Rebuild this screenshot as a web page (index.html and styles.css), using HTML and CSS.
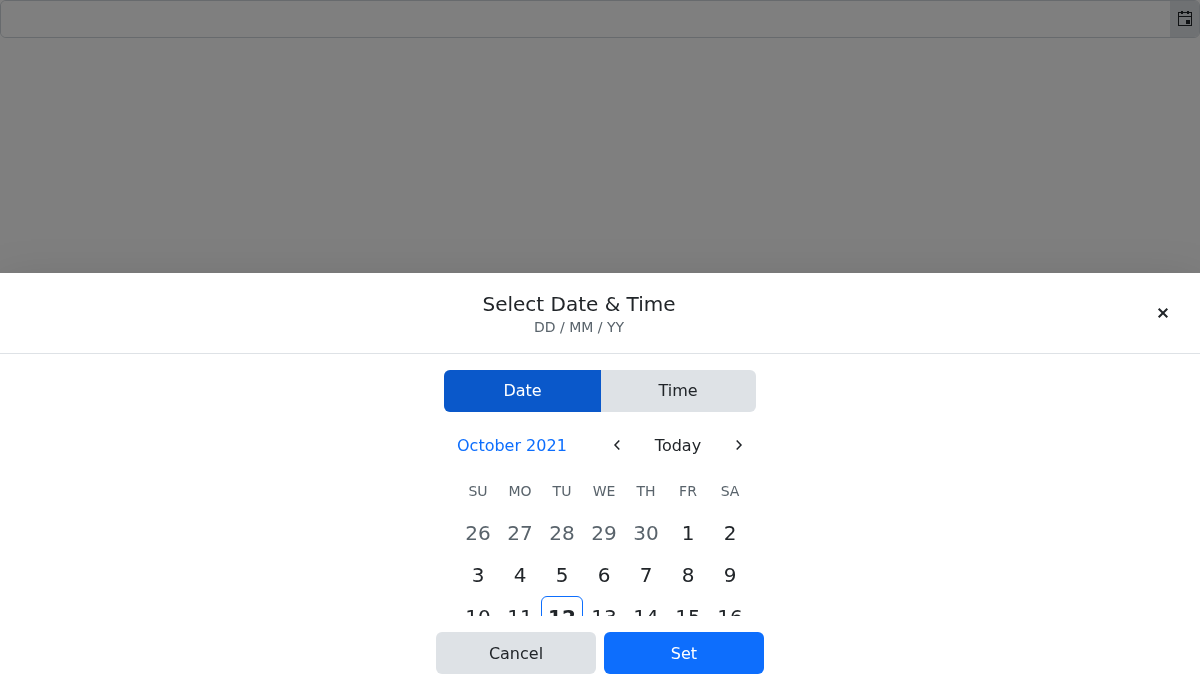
FILE: index.html
```html
<!DOCTYPE html>
<html lang="en">
<head>
<meta charset="utf-8">
<title>Date and time picker</title>
<link rel="stylesheet" href="styles.css">
</head>
<body>
<div class="picker">
  <input class="picker-input" type="text" aria-label="Date and time">
  <button class="picker-toggle" aria-label="Open">
    <svg width="16" height="16" viewBox="0 0 16 16"><path fill="currentColor" fill-rule="evenodd" d="M4 0h2v1h4V0h2v1h3v14H1V1h3zM2 2v3h12V2h-2v1h-2V2H6v1H4V2zM2 6v8h12V6zM9 9h4v4H9z"/></svg>
  </button>
</div>
<div class="overlay"></div>
<section class="sheet">
  <header class="sheet-header">
    <div class="titles">
      <div class="title">Select Date &amp; Time</div>
      <div class="subtitle">DD / MM / YY</div>
    </div>
    <button class="icon-button close" aria-label="Close">
      <svg width="16" height="16" viewBox="0 0 16 16"><path d="M3.7 3.7l8.6 8.6M12.3 3.7l-8.6 8.6" fill="none" stroke="currentColor" stroke-width="2"/></svg>
    </button>
  </header>
  <div class="sheet-content">
    <div class="tabs">
      <button class="tab selected">Date</button>
      <button class="tab">Time</button>
    </div>
    <div class="calendar">
      <div class="calendar-header">
        <button class="month">October 2021</button>
        <div class="nav">
          <button class="icon-button" aria-label="Previous"><svg width="16" height="16" viewBox="0 0 16 16"><path d="M10.3 3.5L6 8l4.3 4.5" fill="none" stroke="currentColor" stroke-width="1.5"/></svg></button>
          <button class="today">Today</button>
          <button class="icon-button" aria-label="Next"><svg width="16" height="16" viewBox="0 0 16 16"><path d="M5.7 3.5L10 8l-4.3 4.5" fill="none" stroke="currentColor" stroke-width="1.5"/></svg></button>
        </div>
      </div>
      <div class="days">
        <span class="weekday">SU</span><span class="weekday">MO</span><span class="weekday">TU</span><span class="weekday">WE</span><span class="weekday">TH</span><span class="weekday">FR</span><span class="weekday">SA</span>
        <span class="day other">26</span><span class="day other">27</span><span class="day other">28</span><span class="day other">29</span><span class="day other">30</span><span class="day">1</span><span class="day">2</span>
        <span class="day">3</span><span class="day">4</span><span class="day">5</span><span class="day">6</span><span class="day">7</span><span class="day">8</span><span class="day">9</span>
        <span class="day">10</span><span class="day">11</span><span class="day current">12</span><span class="day">13</span><span class="day">14</span><span class="day">15</span><span class="day">16</span>
      </div>
    </div>
  </div>
  <footer class="actions">
    <button class="action">Cancel</button>
    <button class="action primary">Set</button>
  </footer>
</section>
</body>
</html>
```

FILE: styles.css
```css
* { box-sizing: border-box; }
body {
  margin: 0;
  height: 682px;
  overflow: hidden;
  background: #fff;
  color: #212529;
  font: 16px/24px "DejaVu Sans", sans-serif;
}
button {
  border: 0;
  padding: 0;
  background: none;
  color: inherit;
  font: inherit;
}
svg { display: block; }
.picker {
  display: flex;
  height: 38px;
  border: 1px solid #ced4da;
  border-radius: 6px;
  overflow: hidden;
}
.picker-input {
  flex: 1;
  min-width: 0;
  border: 0;
  padding: 0 12px;
  font: inherit;
}
.picker-toggle {
  display: flex;
  align-items: center;
  justify-content: center;
  width: 29px;
  padding-left: 1px;
  background: #dee2e6;
}
.overlay {
  position: fixed;
  inset: 0;
  background: rgba(0, 0, 0, .5);
}
.sheet {
  position: fixed;
  left: 0;
  right: 0;
  bottom: 0;
  display: flex;
  flex-direction: column;
  height: 409px;
  background: #fff;
  box-shadow: 0 16px 48px rgba(0, 0, 0, .175);
}
.sheet-header {
  display: flex;
  align-items: center;
  height: 81px;
  padding: 0 16px;
  border-bottom: 1px solid #dee2e6;
}
.titles {
  flex: 1;
  padding-top: 4px;
  text-align: center;
}
.title {
  font-size: 20px;
  line-height: 25px;
}
.subtitle {
  color: #59636b;
  font-size: 14px;
  line-height: 21px;
}
.icon-button {
  display: flex;
  align-items: center;
  justify-content: center;
  width: 42px;
  height: 42px;
}
.sheet-content {
  flex: 1;
  min-height: 0;
  padding-top: 16px;
  overflow: hidden;
}
.tabs {
  display: flex;
  width: 312px;
  height: 42px;
  margin: 0 auto;
  border-radius: 6px;
  overflow: hidden;
  background: #dee2e6;
}
.tab {
  flex: 1;
  padding-right: 1px;
}
.tab.selected {
  flex: 0 0 157px;
  padding-right: 0;
  background: #0a58ca;
  color: #fff;
}
.calendar {
  width: 328px;
  margin: 0 auto;
  padding: 12px 4px 0;
}
.calendar-header {
  display: flex;
  justify-content: space-between;
  height: 42px;
}
.month {
  padding: 2px 0 0 17px;
  color: #0d6efd;
}
.nav { display: flex; }
.today {
  width: 80px;
  padding: 2px 0 0;
}
.days {
  display: grid;
  grid-template-columns: repeat(7, 42px);
  grid-auto-rows: 42px;
  justify-content: end;
  padding: 4px 9px 0 0;
}
.weekday, .day {
  display: flex;
  align-items: center;
  justify-content: center;
}
.weekday {
  color: #59636b;
  font-size: 14px;
}
.day { font-size: 20px; }
.day.other { color: #59636b; }
.day.current {
  border: 1px solid #0d6efd;
  border-radius: 6px;
  font-weight: bold;
}
.actions {
  display: flex;
  justify-content: center;
  gap: 8px;
  height: 66px;
  padding: 16px 0 8px;
}
.action {
  width: 160px;
  padding-top: 2px;
  border-radius: 6px;
  background: #dee2e6;
}
.action.primary {
  background: #0d6efd;
  color: #fff;
}
```
